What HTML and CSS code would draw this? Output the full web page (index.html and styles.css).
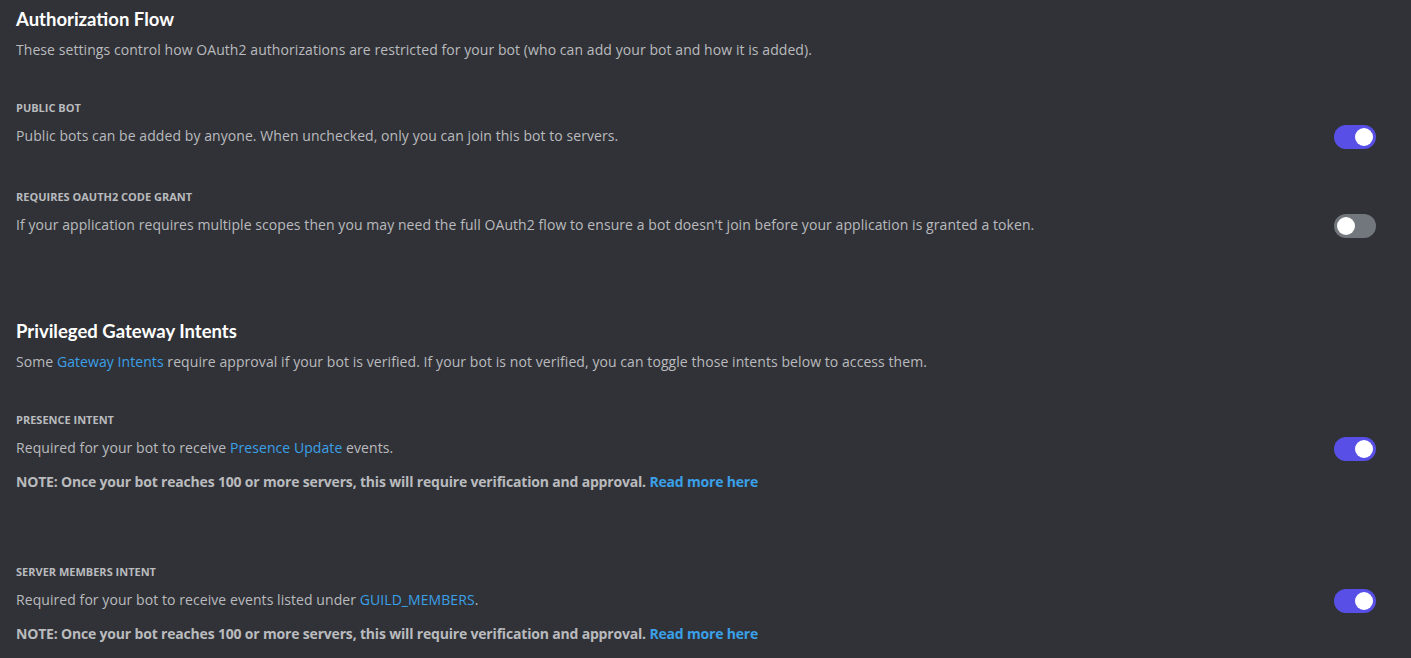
FILE: index.html
```html
<!DOCTYPE html>
<html>
<head>
<meta charset="utf-8">
<link rel="stylesheet" href="styles.css">
</head>
<body>
<div class="page">
  <section class="section">
    <h2 class="section-title">Authorization Flow</h2>
    <p class="section-desc">These settings control how OAuth2 authorizations are restricted for your bot (who can add your bot and how it is added).</p>

    <div class="setting setting-first">
      <div class="label">PUBLIC BOT</div>
      <div class="line">
        <span class="desc">Public bots can be added by anyone. When unchecked, only you can join this bot to servers.</span>
        <span class="toggle on"><span class="knob"></span></span>
      </div>
    </div>

    <div class="setting setting-second">
      <div class="label">REQUIRES OAUTH2 CODE GRANT</div>
      <div class="line">
        <span class="desc">If your application requires multiple scopes then you may need the full OAuth2 flow to ensure a bot doesn't join before your application is granted a token.</span>
        <span class="toggle off"><span class="knob"></span></span>
      </div>
    </div>
  </section>

  <section class="section section-intents">
    <h2 class="section-title">Privileged Gateway Intents</h2>
    <p class="section-desc">Some <a class="link">Gateway Intents</a> require approval if your bot is verified. If your bot is not verified, you can toggle those intents below to access them.</p>

    <div class="setting setting-first">
      <div class="label">PRESENCE INTENT</div>
      <div class="line">
        <span class="desc">Required for your bot to receive <a class="link">Presence Update</a> events.</span>
        <span class="toggle on"><span class="knob"></span></span>
      </div>
      <div class="note">NOTE: Once your bot reaches 100 or more servers, this will require verification and approval. <a class="link">Read more here</a></div>
    </div>

    <div class="setting setting-members">
      <div class="label">SERVER MEMBERS INTENT</div>
      <div class="line">
        <span class="desc">Required for your bot to receive events listed under <a class="link">GUILD_MEMBERS</a>.</span>
        <span class="toggle on"><span class="knob"></span></span>
      </div>
      <div class="note">NOTE: Once your bot reaches 100 or more servers, this will require verification and approval. <a class="link">Read more here</a></div>
    </div>
  </section>
</div>
</body>
</html>
```

FILE: styles.css
```css
html, body {
  margin: 0;
  padding: 0;
  background: #313237;
  height: 100%;
  overflow: hidden;
}

.page {
  padding: 8px 35px 0 16px;
  font-family: "Open Sans", "Noto Sans", sans-serif;
  color: #b9bbbe;
}

.section-title {
  margin: 0;
  font-family: Lato, "Open Sans", sans-serif;
  font-size: 18.5px;
  line-height: 22px;
  font-weight: 700;
  color: #ffffff;
}

.section-desc {
  margin: 10px 0 0 0;
  font-size: 14px;
  line-height: 20px;
  letter-spacing: 0.07px;
  color: #b9bbbe;
}

.section-intents {
  margin-top: 85px;
}

.setting-first {
  margin-top: 40px;
}

.setting-second {
  margin-top: 43px;
}

.setting-members {
  margin-top: 72px;
}

.label {
  font-size: 11px;
  line-height: 16px;
  font-weight: 700;
  color: #b9bbbe;
  margin-bottom: 10px;
}

.line {
  display: flex;
  align-items: center;
  justify-content: space-between;
  height: 20px;
}

.desc {
  font-size: 14px;
  line-height: 20px;
  letter-spacing: 0.07px;
}

.note {
  margin-top: 14px;
  font-size: 14px;
  line-height: 20px;
  font-weight: 700;
  letter-spacing: -0.18px;
  color: #b9bbbe;
}

.link {
  color: #3aa0e8;
  text-decoration: none;
}

.toggle {
  position: relative;
  flex: none;
  width: 42px;
  height: 24px;
  border-radius: 12px;
  margin-top: 2px;
}

.toggle.on {
  background: #5850e6;
}

.toggle.off {
  background: #72767d;
}

.knob {
  position: absolute;
  top: 3px;
  width: 18px;
  height: 18px;
  border-radius: 50%;
  background: #ffffff;
}

.toggle.on .knob {
  right: 3px;
}

.toggle.off .knob {
  left: 3px;
}
```
